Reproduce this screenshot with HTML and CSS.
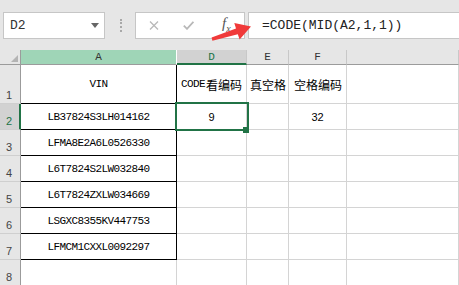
FILE: index.html
```html
<!DOCTYPE html>
<html lang="zh-CN">
<head>
  <meta charset="UTF-8">
  <title>CODE</title>
  <link rel="stylesheet" href="styles.css">
</head>
<body>
  <div class="toolbar">
    <div class="namebox">
      <span>D2</span>
      <svg class="caret" width="8" height="5" viewBox="0 0 8 5"><path d="M0 0H8L4 5Z" fill="#666"/></svg>
    </div>
    <div class="grip"></div>
    <div class="fbuttons">
      <svg class="btn-x" width="10" height="9" viewBox="0 0 10 9"><path d="M1 0.5L9 8.5M9 0.5L1 8.5" stroke="#b8b8b8" stroke-width="1.3" fill="none"/></svg>
      <svg class="btn-ok" width="11" height="9" viewBox="0 0 11 9"><path d="M0.8 4.6L4 7.8L10.4 0.8" stroke="#b8b8b8" stroke-width="1.8" fill="none"/></svg>
      <span class="fx">f<sub>x</sub></span>
    </div>
    <div class="formula">=CODE(MID(A2,1,1))</div>
    <svg class="arrow" width="60" height="35" viewBox="200 10 60 35">
      <polygon points="211.6,37.4 236,28.6 234.3,23 251,26.6 239.6,39.4 237.8,34.2 212.4,40.8" fill="#f03a3a"/>
    </svg>
  </div>

  <div class="sheet">
    <div class="corner"></div>
    <div class="hd sel">A</div>
    <div class="hd on">D</div>
    <div class="hd">E</div>
    <div class="hd">F</div>
    <div class="hd"></div>

    <div class="rh">1</div>
    <div class="c box">VIN</div>
    <div class="c">CODE<span class="zh">看编码</span></div>
    <div class="c zh">真空格</div>
    <div class="c zh">空格编码</div>
    <div class="c"></div>

    <div class="rh on">2</div>
    <div class="c box">LB37824S3LH014162</div>
    <div class="c num cur">9</div>
    <div class="c"></div>
    <div class="c num">32</div>
    <div class="c"></div>

    <div class="rh">3</div>
    <div class="c box">LFMA8E2A6L0526330</div>
    <div class="c"></div>
    <div class="c"></div>
    <div class="c"></div>
    <div class="c"></div>

    <div class="rh">4</div>
    <div class="c box">L6T7824S2LW032840</div>
    <div class="c"></div>
    <div class="c"></div>
    <div class="c"></div>
    <div class="c"></div>

    <div class="rh">5</div>
    <div class="c box">L6T7824ZXLW034669</div>
    <div class="c"></div>
    <div class="c"></div>
    <div class="c"></div>
    <div class="c"></div>

    <div class="rh">6</div>
    <div class="c box">LSGXC8355KV447753</div>
    <div class="c"></div>
    <div class="c"></div>
    <div class="c"></div>
    <div class="c"></div>

    <div class="rh">7</div>
    <div class="c box">LFMCM1CXXL0092297</div>
    <div class="c"></div>
    <div class="c"></div>
    <div class="c"></div>
    <div class="c"></div>

    <div class="rh">8</div>
    <div class="c"></div>
    <div class="c"></div>
    <div class="c"></div>
    <div class="c"></div>
    <div class="c"></div>
  </div>
</body>
</html>
```

FILE: styles.css
```css
* {
  box-sizing: border-box;
}
body {
  margin: 0;
  background: #fff;
  font-family: "Liberation Sans", "Noto Sans CJK SC", sans-serif;
  overflow: hidden;
}

/* formula bar */
.toolbar {
  position: relative;
  height: 50px;
  background: #e6e6e6;
  display: flex;
  align-items: flex-start;
  padding: 12px 0 0 3px;
}
.namebox {
  width: 102px;
  height: 27px;
  background: #fff;
  border: 1px solid #c6c6c6;
  display: flex;
  align-items: center;
  justify-content: space-between;
  padding: 0 5px 0 6px;
  font: 13px "Liberation Mono", monospace;
  color: #333;
}
.grip {
  width: 2px;
  height: 13px;
  margin: 7px 13px 0 15px;
  border-left: 2px dotted #a8a8a8;
}
.fbuttons {
  width: 110px;
  height: 27px;
  background: #fff;
  border: 1px solid #c6c6c6;
  display: flex;
  align-items: center;
  padding-left: 13px;
}
.btn-ok {
  margin-left: 24px;
}
.fx {
  margin-left: 28px;
  margin-top: -3px;
  font: italic 15px "Liberation Serif", serif;
  color: #555;
}
.fx sub {
  font-size: 10px;
}
.formula {
  flex: 1;
  height: 27px;
  margin-left: 3px;
  background: #fff;
  border: 1px solid #c6c6c6;
  border-right: none;
  padding-left: 13px;
  font: 13px/25px "Liberation Mono", monospace;
  color: #222;
}
.arrow {
  position: absolute;
  left: 200px;
  top: 10px;
}

/* grid */
.sheet {
  display: grid;
  grid-template-columns: 21px 156px 70px 42px 58px 1fr;
  grid-template-rows: 15px 39px repeat(7, 26px);
}
.corner {
  position: relative;
  background: #e6e6e6;
  border-right: 1px solid #9b9b9b;
  border-bottom: 1px solid #9b9b9b;
}
.corner::after {
  content: "";
  position: absolute;
  right: 2px;
  bottom: 2px;
  border-left: 7px solid transparent;
  border-bottom: 7px solid #b4b4b4;
}
.hd {
  display: flex;
  align-items: center;
  justify-content: center;
  background: #e6e6e6;
  border-right: 1px solid #c8c8c8;
  border-bottom: 1px solid #9b9b9b;
  font: 11px "Liberation Mono", monospace;
  color: #333;
}
.hd.sel {
  background: #9fd5b7;
  border-right-color: #fff;
}
.hd.on {
  background: #d2d2d2;
  color: #217346;
  border-bottom: 2px solid #217346;
}
.rh {
  display: flex;
  align-items: flex-end;
  background: #e6e6e6;
  border-right: 1px solid #9b9b9b;
  border-bottom: 1px solid #cfcfcf;
  padding: 0 0 2px 6px;
  font-size: 11px;
  color: #444;
}
.rh.on {
  background: #d2d2d2;
  color: #217346;
  border-right: 2px solid #217346;
}
.c {
  display: flex;
  align-items: center;
  justify-content: center;
  border-right: 1px solid #d4d4d4;
  border-bottom: 1px solid #d4d4d4;
  font: 11px "Liberation Mono", "Noto Sans CJK SC", monospace;
  letter-spacing: -0.6px;
  color: #000;
}
.c.box {
  border-right-color: #000;
  border-bottom-color: #000;
}
.zh,
.c.zh {
  font: 12px "Noto Sans CJK SC", sans-serif;
  letter-spacing: 0;
}
.zh {
  margin-left: 1px;
}
.c.num {
  font: 11px "Liberation Sans", sans-serif;
  letter-spacing: 0;
}
.cur {
  position: relative;
}
.cur::after {
  content: "";
  position: absolute;
  top: -2px;
  left: -2px;
  right: -3px;
  bottom: -2px;
  border: 2px solid #217346;
  z-index: 1;
}
.cur::before {
  content: "";
  position: absolute;
  right: -3px;
  bottom: -4px;
  width: 6px;
  height: 6px;
  background: #217346;
  z-index: 2;
}
```
